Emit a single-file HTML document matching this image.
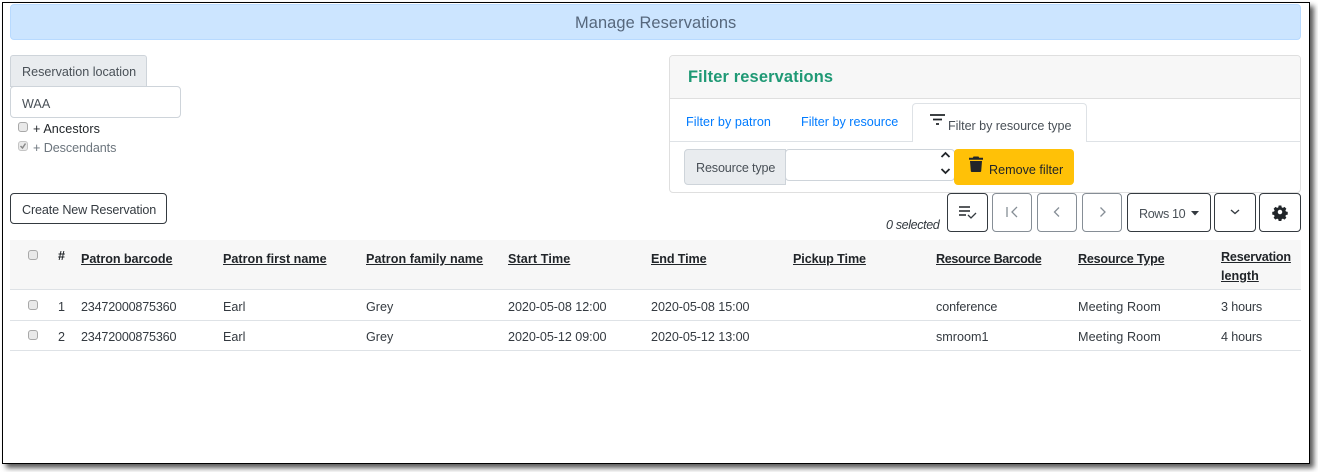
<!DOCTYPE html>
<html><head><meta charset="utf-8"><title>Manage Reservations</title>
<style>
html,body{margin:0;padding:0;background:#fff}
body{width:1318px;height:472px;position:relative;overflow:hidden;font-family:"Liberation Sans",sans-serif;font-size:12.6px;color:#343a40}
.a,.t,.b,.c{position:absolute;box-sizing:border-box}
.t{line-height:20px;white-space:nowrap}
.b{border:1px solid #343a40;border-radius:4px;height:39px;top:193px;background:#fff}
.g{border-color:#868e96}
.c{width:10px;height:10px;border:1px solid #a8a8a8;border-radius:3px;background:#e9e9e9}
.h{font-weight:bold;text-decoration:underline;color:#212529;font-size:12.6px}
.l{height:1px;left:10px;width:1291px;background:#dee2e6}
.n{letter-spacing:-.2px}
.d{letter-spacing:-.06px}
svg{position:absolute;overflow:visible}
</style></head><body>
<div class="a" style="left:2px;top:2px;width:1308px;height:462px;border:1px solid #000;box-shadow:4px 4px 5px rgba(0,0,0,.65);background:#fff"></div>

<div class="a" style="left:10px;top:4px;width:1291px;height:36px;background:#cce5ff;border:1px solid #b8daff;border-radius:4px"></div>
<div class="t" style="left:575px;top:13px;font-size:16.4px;letter-spacing:.1px;color:#56677c">Manage Reservations</div>

<div class="a" style="left:10px;top:55px;width:137px;height:32px;background:#e9ecef;border:1px solid #ced4da;border-radius:3px 3px 0 0"></div>
<div class="t" style="left:22px;top:62px;color:#495057">Reservation location</div>
<div class="a" style="left:10px;top:86px;width:171px;height:32px;background:#fff;border:1px solid #ced4da;border-radius:4px"></div>
<div class="t" style="left:22px;top:94px;color:#495057">WAA</div>
<div class="c" style="left:18px;top:122px"></div>
<div class="t" style="left:33px;top:119px;color:#212529;letter-spacing:.08px">+ Ancestors</div>
<div class="c" style="left:18px;top:141px;border-color:#c4c4c4"></div>
<svg style="left:18px;top:141px" width="10" height="10"><path d="M2.5 5l2 2 3-4.500" fill="none" stroke="#8a8a8a" stroke-width="1.500"/></svg>
<div class="t" style="left:33px;top:138px;color:#6c757d;letter-spacing:-.08px">+ Descendants</div>
<div class="a" style="left:10px;top:193px;width:157px;height:31px;border:1px solid #343a40;border-radius:4px"></div>
<div class="t" style="left:22px;top:200px;letter-spacing:-.14px">Create New Reservation</div>

<div class="a" style="left:669px;top:55px;width:632px;height:138px;border:1px solid #dfdfdf;border-radius:4px"></div>
<div class="a" style="left:670px;top:56px;width:630px;height:43px;background:#f7f7f7;border-bottom:1px solid #dfdfdf;border-radius:3px 3px 0 0"></div>
<div class="t" style="left:688px;top:67px;font-size:16.4px;font-weight:bold;letter-spacing:.16px;color:#1f9975">Filter reservations</div>
<div class="a" style="left:670px;top:141px;width:630px;height:1px;background:#dee2e6"></div>
<div class="t" style="left:686px;top:112px;color:#007bff;letter-spacing:.06px">Filter by patron</div>
<div class="t" style="left:801px;top:112px;color:#007bff">Filter by resource</div>
<div class="a" style="left:912px;top:103px;width:175px;height:39px;background:#fff;border:1px solid #dee2e6;border-bottom:0;border-radius:4px 4px 0 0"></div>
<svg style="left:930px;top:114px" width="16" height="12"><path d="M0 1h15M3 5.500h9M6 10h3" stroke="#212529" stroke-width="1.700" fill="none"/></svg>
<div class="t" style="left:948px;top:116px;color:#495057;letter-spacing:-.05px">Filter by resource type</div>
<div class="a" style="left:684px;top:149px;width:102px;height:36px;background:#e9ecef;border:1px solid #ced4da;border-radius:4px 0 0 4px"></div>
<div class="t" style="left:696px;top:158px;color:#495057;letter-spacing:-.15px">Resource type</div>
<div class="a" style="left:785px;top:149px;width:170px;height:32px;background:#fff;border:1px solid #ced4da;border-radius:4px"></div>
<svg style="left:940px;top:151px" width="11" height="26"><path d="M1.500 6l4-4 4 4M1.500 18l4 4 4-4" fill="none" stroke="#212529" stroke-width="1.800"/></svg>
<div class="a" style="left:954px;top:149px;width:120px;height:36px;background:#ffc107;border-radius:4px"></div>
<svg style="left:969px;top:156px" width="14" height="16"><path d="M4.500 0.500h5l.7 1.300H14v2H0v-2h3.800zM1 5h12l-.8 10a1 1 0 0 1-1 1H2.800a1 1 0 0 1-1-1z" fill="#212529"/></svg>
<div class="t" style="left:989px;top:160px;color:#212529">Remove filter</div>

<div class="t" style="left:886px;top:215px;font-style:italic;color:#343a40;letter-spacing:-.4px">0 selected</div>
<div class="b" style="left:947px;width:41px"></div>
<svg style="left:959px;top:206px" width="18" height="13"><path d="M0 1h11M0 5h11M0 9h7" stroke="#212529" stroke-width="1.500" fill="none"/><path d="M9 9l3 3 5-5" stroke="#343a40" stroke-width="1.300" fill="none"/></svg>
<div class="b g" style="left:992px;width:40px"></div>
<svg style="left:1006px;top:206px" width="13" height="13"><path d="M1 1v10M11 1L6 6l5 5" stroke="#868e96" stroke-width="1.300" fill="none"/></svg>
<div class="b g" style="left:1037px;width:40px"></div>
<svg style="left:1053px;top:206px" width="8" height="13"><path d="M6 1.500L1.500 6 6 10.500" stroke="#868e96" stroke-width="1.300" fill="none"/></svg>
<div class="b g" style="left:1082px;width:40px"></div>
<svg style="left:1099px;top:206px" width="8" height="13"><path d="M1.500 1.500L6 6l-4.500 4.500" stroke="#868e96" stroke-width="1.300" fill="none"/></svg>
<div class="b" style="left:1127px;width:84px"></div>
<div class="t" style="left:1139px;top:204px;color:#495057;letter-spacing:-.4px">Rows 10</div>
<svg style="left:1191px;top:211px" width="8" height="5"><path d="M0 0h8L4 4.500z" fill="#343a40"/></svg>
<div class="b" style="left:1214px;width:42px"></div>
<svg style="left:1230px;top:209px" width="10" height="6"><path d="M1 1l4 3.500L9 1" stroke="#343a40" stroke-width="1.400" fill="none"/></svg>
<div class="b" style="left:1259px;width:42px"></div>
<svg style="left:1272px;top:204px" width="16" height="16" viewBox="0 0 16 16"><path fill="#212529" fill-rule="evenodd" d="M6.500.8h3l.4 2 1.300.6 1.800-1.100 2.100 2.100-1.100 1.800.6 1.300 2 .4v3l-2 .4-.6 1.300 1.100 1.800-2.100 2.100-1.800-1.100-1.300.6-.4 2h-3l-.4-2-1.300-.6-1.800 1.100-2.100-2.100 1.100-1.800-.6-1.300-2-.4v-3l2-.4.6-1.300L.9 4.400 3 2.300l1.800 1.100 1.300-.6zM8 5.500a2.500 2.500 0 1 0 0 5 2.500 2.500 0 0 0 0-5z" transform="translate(.8 .8) scale(.9)"/></svg>

<div class="a" style="left:10px;top:240px;width:1291px;height:50px;background:#f7f7f7;border-bottom:1px solid #dee2e6"></div>
<div class="c" style="left:28px;top:250px"></div>
<div class="t h" style="left:58px;top:246px;text-decoration:none">#</div>
<div class="t h" style="left:81px;top:249px;letter-spacing:-.07px">Patron barcode</div>
<div class="t h" style="left:223px;top:249px">Patron first name</div>
<div class="t h" style="left:366px;top:249px;letter-spacing:.05px">Patron family name</div>
<div class="t h" style="left:508px;top:249px;letter-spacing:.1px">Start Time</div>
<div class="t h" style="left:651px;top:249px;letter-spacing:-.12px">End Time</div>
<div class="t h" style="left:793px;top:249px;letter-spacing:-.09px">Pickup Time</div>
<div class="t h" style="left:936px;top:249px;letter-spacing:-.37px">Resource Barcode</div>
<div class="t h" style="left:1078px;top:249px;letter-spacing:-.23px">Resource Type</div>
<div class="t h" style="left:1221px;top:247px;letter-spacing:-.2px">Reservation</div>
<div class="t h" style="left:1221px;top:266px">length</div>

<div class="c" style="left:28px;top:300px"></div>
<div class="t" style="left:58px;top:297px">1</div>
<div class="t n" style="left:81px;top:297px">23472000875360</div>
<div class="t" style="left:223px;top:297px">Earl</div>
<div class="t" style="left:366px;top:297px">Grey</div>
<div class="t d" style="left:508px;top:297px">2020-05-08 12:00</div>
<div class="t d" style="left:651px;top:297px">2020-05-08 15:00</div>
<div class="t" style="left:936px;top:297px;letter-spacing:-.1px">conference</div>
<div class="t" style="left:1078px;top:297px;letter-spacing:.08px">Meeting Room</div>
<div class="t" style="left:1221px;top:297px;letter-spacing:-.14px">3 hours</div>
<div class="a l" style="top:320px"></div>

<div class="c" style="left:28px;top:330px"></div>
<div class="t" style="left:58px;top:327px">2</div>
<div class="t n" style="left:81px;top:327px">23472000875360</div>
<div class="t" style="left:223px;top:327px">Earl</div>
<div class="t" style="left:366px;top:327px">Grey</div>
<div class="t d" style="left:508px;top:327px">2020-05-12 09:00</div>
<div class="t d" style="left:651px;top:327px">2020-05-12 13:00</div>
<div class="t" style="left:936px;top:327px">smroom1</div>
<div class="t" style="left:1078px;top:327px;letter-spacing:.08px">Meeting Room</div>
<div class="t" style="left:1221px;top:327px;letter-spacing:-.14px">4 hours</div>
<div class="a l" style="top:350px"></div>
</body></html>
